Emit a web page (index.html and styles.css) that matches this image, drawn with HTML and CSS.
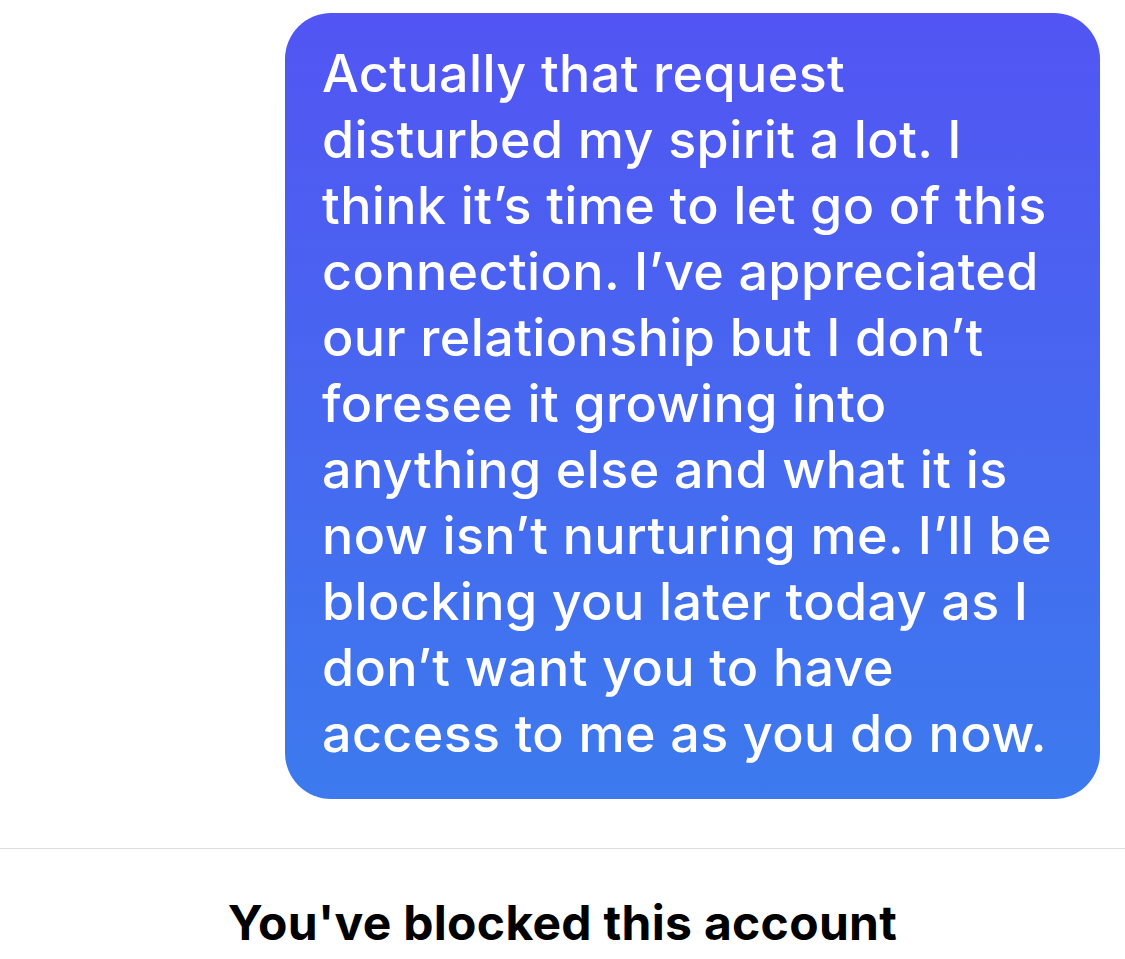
FILE: index.html
```html
<!DOCTYPE html>
<html lang="en">
<head>
<meta charset="utf-8">
<title>Chat</title>
<link rel="stylesheet" href="styles.css">
</head>
<body>
<main class="thread">
  <div class="row">
    <div class="bubble">Actually that request<br>disturbed my spirit a lot. I<br>think it’s time to let go of this<br>connection. I’ve appreciated<br>our relationship but I don’t<br>foresee it growing into<br>anything else and what it is<br>now isn’t nurturing me. I’ll be<br>blocking you later today as I<br>don’t want you to have<br>access to me as you do now.</div>
  </div>
</main>
<footer class="blocked">
  <p class="blocked-title">You've blocked this account</p>
</footer>
</body>
</html>
```
FILE: styles.css
```css
html, body {
  margin: 0;
  padding: 0;
  background: #ffffff;
}
body {
  width: 1125px;
  height: 959px;
  overflow: hidden;
}
.thread {
  padding: 13px 25px 49px 0;
}
.row {
  display: flex;
  justify-content: flex-end;
}
.bubble {
  width: 815px;
  box-sizing: border-box;
  padding: 28px 30px 32px 37px;
  border-radius: 46px;
  background: linear-gradient(180deg, #5255f3 0%, #4767f0 50%, #3c7aee 100%);
  color: #ffffff;
  font-family: Inter, "Noto Sans", sans-serif;
  font-weight: 500;
  font-size: 52px;
  line-height: 66px;
  letter-spacing: 0.4px;
  white-space: nowrap;
}
.blocked {
  border-top: 1px solid #dcdcdc;
  display: flex;
  justify-content: center;
}
.blocked-title {
  margin: 47px 0 0;
  font-family: Inter, "Liberation Sans", sans-serif;
  font-weight: 700;
  font-size: 48px;
  line-height: 54px;
  letter-spacing: 0.3px;
  color: #000000;
}
```
